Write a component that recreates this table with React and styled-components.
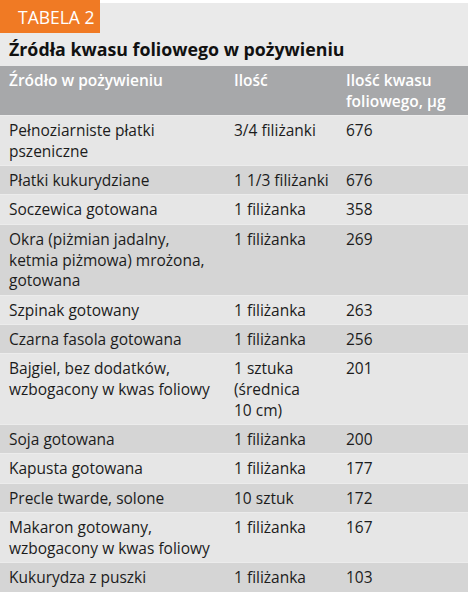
import React from "react";
import styled, { createGlobalStyle } from "styled-components";

const Global = createGlobalStyle`
  html, body { margin: 0; padding: 0; background: #ffffff; }
  body { font-family: "Open Sans", "Noto Sans", sans-serif; }
`;

const Page = styled.div`
  width: 468px;
  display: flex;
  flex-direction: column;
`;

const TopRow = styled.div`
  display: flex;
  height: 33px;
`;

const Badge = styled.div`
  width: 100px;
  height: 33px;
  background: #f07a24;
  color: #ffffff;
  font-size: 17.5px;
  line-height: 34px;
  padding-left: 18px;
  box-sizing: border-box;
`;

const TopFill = styled.div`
  flex: 1;
  margin-top: 3px;
  background: #eaeaea;
`;

const Title = styled.h1`
  margin: 0;
  background: #eaeaea;
  height: 33px;
  padding-left: 9px;
  font-size: 17.8px;
  font-weight: 700;
  line-height: 32px;
  color: #111111;
`;

const Table = styled.div`
  display: grid;
  grid-template-columns: 225px 112px 1fr;
`;

const Cell = styled.div`
  padding: 4px 4px 4.5px 9px;
  font-size: 15.5px;
  line-height: 20.8px;
  color: ${(p) => (p.$head ? "#ffffff" : "#1c1c1c")};
  font-weight: ${(p) => (p.$head ? 600 : 400)};
  background: ${(p) => (p.$head ? "#a7a8aa" : p.$dark ? "#d5d5d5" : "#e6e6e6")};
  border-top: ${(p) => (p.$head ? "none" : "1px solid #ececec")};
  margin-top: ${(p) => (p.$head ? "0" : "-1px")};
  white-space: nowrap;
`;

const rows = [
  [["Pełnoziarniste płatki", "pszeniczne"], ["3/4 filiżanki"], "676"],
  [["Płatki kukurydziane"], ["1 1/3 filiżanki"], "676"],
  [["Soczewica gotowana"], ["1 filiżanka"], "358"],
  [["Okra (piżmian jadalny,", "ketmia piżmowa) mrożona,", "gotowana"], ["1 filiżanka"], "269"],
  [["Szpinak gotowany"], ["1 filiżanka"], "263"],
  [["Czarna fasola gotowana"], ["1 filiżanka"], "256"],
  [["Bajgiel, bez dodatków,", "wzbogacony w kwas foliowy"], ["1 sztuka", "(średnica", "10 cm)"], "201"],
  [["Soja gotowana"], ["1 filiżanka"], "200"],
  [["Kapusta gotowana"], ["1 filiżanka"], "177"],
  [["Precle twarde, solone"], ["10 sztuk"], "172"],
  [["Makaron gotowany,", "wzbogacony w kwas foliowy"], ["1 filiżanka"], "167"],
  [["Kukurydza z puszki"], ["1 filiżanka"], "103"],
];

const Lines = ({ lines }) =>
  lines.map((l, i) => (
    <React.Fragment key={i}>
      {i > 0 && <br />}
      {l}
    </React.Fragment>
  ));

export default function App() {
  return (
    <>
      <Global />
      <Page>
        <TopRow>
          <Badge>TABELA 2</Badge>
          <TopFill />
        </TopRow>
        <Title>Źródła kwasu foliowego w pożywieniu</Title>
        <Table>
          <Cell $head>Źródło w pożywieniu</Cell>
          <Cell $head>Ilość</Cell>
          <Cell $head>
            Ilość kwasu
            <br />
            foliowego, µg
          </Cell>
          {rows.map((r, i) => {
            const dark = i % 2 === 1;
            return (
              <React.Fragment key={i}>
                <Cell $dark={dark}>
                  <Lines lines={r[0]} />
                </Cell>
                <Cell $dark={dark}>
                  <Lines lines={r[1]} />
                </Cell>
                <Cell $dark={dark}>{r[2]}</Cell>
              </React.Fragment>
            );
          })}
        </Table>
      </Page>
    </>
  );
}
